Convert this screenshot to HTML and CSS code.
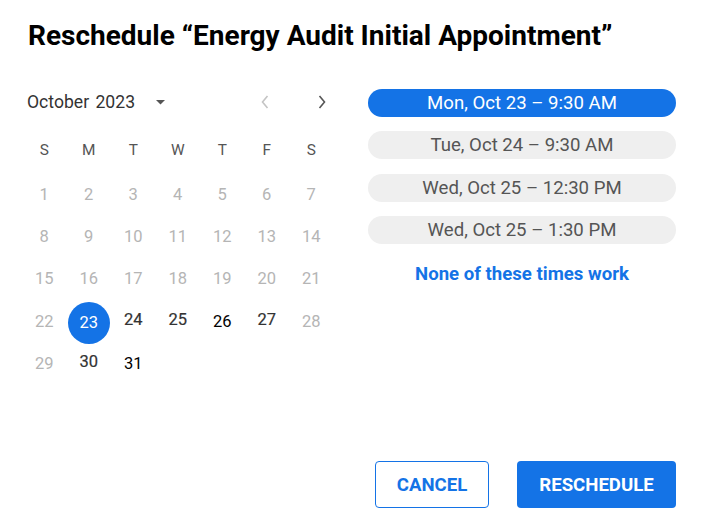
FILE: index.html
```html
<!DOCTYPE html>
<html>
<head>
<meta charset="utf-8">
<link rel="stylesheet" href="styles.css">
</head>
<body>
<div class="dialog">
  <h1 class="title">Reschedule “Energy Audit Initial Appointment”</h1>
  <div class="content">
    <div class="calendar">
      <div class="cal-header">
        <div class="month">October 2023</div>
        <svg class="caret" width="9" height="5" viewBox="0 0 9 5"><path d="M0 0 L9 0 L4.5 4.5 Z" fill="#555"/></svg>
        <div class="spacer"></div>
        <svg class="chev prev" width="10" height="16" viewBox="0 0 10 16"><path d="M7.5 2 L2.5 8 L7.5 14" fill="none" stroke="#c4c4c4" stroke-width="1.6"/></svg>
        <svg class="chev next" width="10" height="16" viewBox="0 0 10 16"><path d="M2.5 2 L7.5 8 L2.5 14" fill="none" stroke="#555" stroke-width="1.6"/></svg>
      </div>
      <div class="weekdays">
        <span>S</span><span>M</span><span>T</span><span>W</span><span>T</span><span>F</span><span>S</span>
      </div>
      <div class="days">
        <span class="off">1</span><span class="off">2</span><span class="off">3</span><span class="off">4</span><span class="off">5</span><span class="off">6</span><span class="off">7</span>
        <span class="off">8</span><span class="off">9</span><span class="off">10</span><span class="off">11</span><span class="off">12</span><span class="off">13</span><span class="off">14</span>
        <span class="off">15</span><span class="off">16</span><span class="off">17</span><span class="off">18</span><span class="off">19</span><span class="off">20</span><span class="off">21</span>
        <span class="off">22</span><span class="sel"><b>23</b></span><span class="on">24</span><span class="on">25</span><span class="dark">26</span><span class="on">27</span><span class="off">28</span>
        <span class="off">29</span><span class="on">30</span><span class="dark">31</span>
      </div>
    </div>
    <div class="times">
      <div class="pill active">Mon, Oct 23 – 9:30 AM</div>
      <div class="pill">Tue, Oct 24 – 9:30 AM</div>
      <div class="pill">Wed, Oct 25 – 12:30 PM</div>
      <div class="pill">Wed, Oct 25 – 1:30 PM</div>
      <div class="none">None of these times work</div>
    </div>
  </div>
  <div class="actions">
    <button class="btn cancel">CANCEL</button>
    <button class="btn primary">RESCHEDULE</button>
  </div>
</div>
</body>
</html>
```
FILE: styles.css
```css
html, body {
  margin: 0;
  padding: 0;
  background: #fff;
  font-family: Roboto, "Liberation Sans", sans-serif;
}
.dialog {
  width: 702px;
  height: 532px;
  box-sizing: border-box;
  padding: 20px 26px 0 22px;
  display: flex;
  flex-direction: column;
  overflow: hidden;
}
.title {
  margin: 0 0 34px 6px;
  font-size: 28px;
  line-height: 32px;
  font-weight: 700;
  color: #000;
  white-space: nowrap;
}
.content {
  display: flex;
  height: 300px;
}
.calendar {
  width: 311.5px;
}
.cal-header {
  height: 32px;
  display: flex;
  align-items: center;
  padding-left: 5px;
}
.month {
  font-size: 17.6px;
  color: #333;
  word-spacing: 2px;
}
.caret {
  margin-left: 21px;
}
.spacer { flex: 1; }
.chev.prev { margin-right: 47px; }
.chev.next { margin-right: 7px; }
.weekdays {
  margin-top: 12px;
  display: grid;
  grid-template-columns: repeat(7, 44.5px);
  height: 40px;
  align-items: center;
  font-size: 15.4px;
  color: #555;
}
.weekdays span, .days span {
  text-align: center;
}
.days {
  margin-top: 3px;
  display: grid;
  grid-template-columns: repeat(7, 44.5px);
  grid-auto-rows: 42.3px;
  align-items: center;
  font-size: 16.5px;
}
.days .off { color: #b5b5b5; }
.days .on {
  color: #333;
  -webkit-text-stroke: 0.2px #333;
  margin-bottom: 3px;
}
.days .dark { color: #000; }
.days .sel {
  display: flex;
  justify-content: center;
  align-items: center;
}
.days .sel b {
  width: 42px;
  height: 42px;
  border-radius: 50%;
  background: #1473e6;
  color: #fff;
  font-weight: 400;
  display: flex;
  justify-content: center;
  align-items: center;
  margin-top: 3px;
}
.times {
  margin-left: 34.5px;
  width: 308px;
  display: flex;
  flex-direction: column;
  padding-top: 3px;
}
.pill {
  height: 28px;
  border-radius: 14px;
  background: #efefef;
  color: #555;
  font-size: 18.6px;
  display: flex;
  align-items: center;
  justify-content: center;
  margin-bottom: 14.3px;
}
.pill.active {
  background: #1473e6;
  color: #fff;
}
.none {
  margin-top: 5px;
  text-align: center;
  font-size: 18.6px;
  font-weight: 700;
  color: #1473e6;
  line-height: 22px;
}
.actions {
  margin-top: 75px;
  display: flex;
  justify-content: flex-end;
  gap: 28px;
}
.btn {
  height: 47px;
  border-radius: 4px;
  font-family: Roboto, "Liberation Sans", sans-serif;
  font-size: 18.6px;
  font-weight: 700;
  cursor: pointer;
  padding: 0;
}
.btn.cancel {
  width: 114px;
  background: #fff;
  color: #1473e6;
  border: 1px solid #1473e6;
}
.btn.primary {
  width: 159px;
  background: #1473e6;
  color: #fff;
  border: none;
}
```
